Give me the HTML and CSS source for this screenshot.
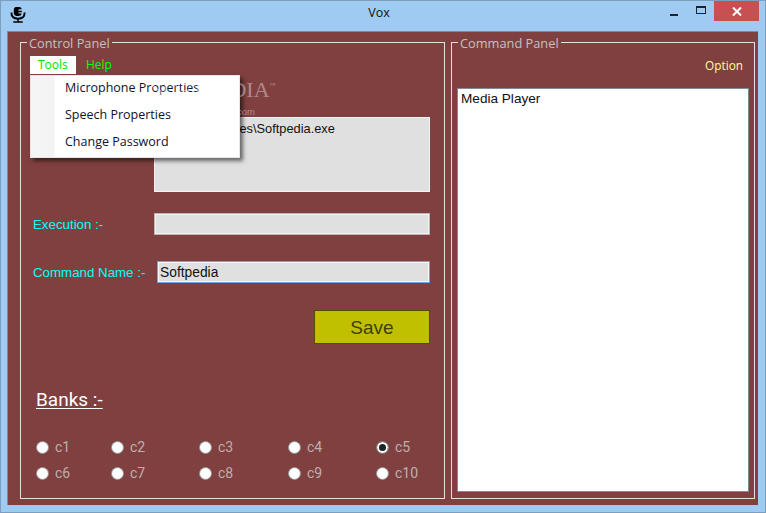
FILE: index.html
```html
<!DOCTYPE html>
<html lang="en">
<head>
<meta charset="utf-8">
<title>Vox</title>
<link rel="stylesheet" href="styles.css">
</head>
<body>
<div class="window">
  <header class="titlebar">
    <svg class="app-icon" width="17" height="17" viewBox="0 0 18 18">
      <path d="M6 1h3.500a3 3 0 0 1 3 2.500H9V5h3.500v1.500H9V8h3.500a3.300 3.300 0 0 1-3 2.500H6.500A3 3 0 0 1 4 8V4a3 3 0 0 1 2-3z" fill="#000"/>
      <path d="M1.500 7c0 4 2.500 6.500 7 6.500s7-2.500 7-6.500" fill="none" stroke="#000" stroke-width="2"/>
      <path d="M8.500 13v3.500M3.500 17h10" fill="none" stroke="#000" stroke-width="1.500"/>
    </svg>
    <div class="title">Vox</div>
    <div class="win-controls">
      <span class="ctl ctl-min"><i class="min-bar"></i></span>
      <span class="ctl ctl-max"><i class="max-box"></i></span>
      <span class="ctl ctl-close">
        <svg width="10" height="9" viewBox="0 0 10 9"><path d="M1 .5l8 8M9 .5l-8 8" stroke="#fff" stroke-width="2" fill="none"/></svg>
      </span>
    </div>
  </header>
  <main class="client">
    <fieldset class="panel control-panel">
      <legend>Control Panel</legend>
      <nav class="menubar">
        <span class="menu-item active">Tools</span>
        <span class="menu-item">Help</span>
      </nav>
      <div class="row row-path">
        <textarea class="field area" disabled>C:\Program Files\Softpedia.exe</textarea>
      </div>
      <div class="row row-exec">
        <label class="lbl">Execution :-</label>
        <input class="field" disabled>
      </div>
      <div class="row row-cmd">
        <label class="lbl">Command Name :-</label>
        <input class="field focus" value="Softpedia">
      </div>
      <div class="save-row"><button class="save">Save</button></div>
      <h2 class="banks">Banks :-</h2>
      <div class="radios">
        <label class="radio"><i class="dot"></i>c1</label>
        <label class="radio"><i class="dot"></i>c2</label>
        <label class="radio"><i class="dot"></i>c3</label>
        <label class="radio"><i class="dot"></i>c4</label>
        <label class="radio"><i class="dot on"></i>c5</label>
        <label class="radio"><i class="dot"></i>c6</label>
        <label class="radio"><i class="dot"></i>c7</label>
        <label class="radio"><i class="dot"></i>c8</label>
        <label class="radio"><i class="dot"></i>c9</label>
        <label class="radio"><i class="dot"></i>c10</label>
      </div>
      <ul class="dropdown">
        <li>Microphone Properties</li>
        <li>Speech Properties</li>
        <li>Change Password</li>
      </ul>
      <div class="watermark"><span class="wm-big">SOFTPEDIA<sup>™</sup></span><span class="wm-small">www.softpedia.com</span></div>
    </fieldset>
    <fieldset class="panel command-panel">
      <legend>Command Panel</legend>
      <div class="option">Option</div>
      <div class="listbox">Media Player</div>
    </fieldset>
  </main>
</div>
</body>
</html>
```

FILE: styles.css
```css
* { box-sizing: border-box; }
html, body { margin: 0; padding: 0; }
body { width: 766px; height: 513px; overflow: hidden; background: #9fcbf2; }

.window {
  width: 766px;
  height: 513px;
  display: flex;
  flex-direction: column;
  background: #9fcbf2;
  border: 1px solid #7c9fbf;
}

.titlebar {
  height: 29px;
  flex: none;
  display: flex;
  align-items: flex-start;
  position: relative;
}
.app-icon { margin: 5px 0 0 9px; }
.title {
  position: absolute;
  left: 0;
  right: 8px;
  top: 3px;
  text-align: center;
  font: 12.5px/18px "Open Sans", "Noto Sans", sans-serif;
  color: #111;
}
.win-controls { margin-left: auto; margin-right: 6px; display: flex; height: 20px; }
.ctl { display: flex; align-items: center; justify-content: center; height: 20px; }
.ctl-min { width: 27px; }
.ctl-max { width: 27px; }
.ctl-close { width: 45px; background: #c75050; }
.min-bar { width: 8px; height: 2px; background: #222; margin-top: 7px; }
.max-box { width: 10px; height: 8px; border: 1px solid #222; border-top-width: 2px; margin-top: -2px; }

.client {
  margin: 1px 6px 0 6px;
  width: 751px;
  height: 474px;
  background: #804040;
  display: flex;
  padding: 2px 0 0 12px;
  border-top: 1px solid #6f8db0;
  border-left: 1px solid #6f8db0;
}

.panel {
  margin: 0;
  padding: 0;
  border: 1px solid #e6e0e0;
  height: 465px;
  position: relative;
  font-family: "Liberation Sans", Arial, sans-serif;
}
.panel legend {
  margin-left: 6px;
  padding: 2px 2px 0;
  font: 12.8px/15px "Open Sans", "Noto Sans", sans-serif;
  color: #c4c0c0;
}
.control-panel { width: 425px; margin-right: 6px; }
.command-panel { width: 304px; }

.menubar { display: flex; margin: 5px 0 0 9px; height: 18px; }
.menu-item {
  font: 12px/18px "Open Sans", "Noto Sans", sans-serif;
  color: #00ff00;
  padding: 0 0 0 8px;
  width: 46px;
}
.menu-item.active { background: #fff; color: #00e000; }
.menu-item + .menu-item { padding-left: 10px; }

.row { display: flex; align-items: center; }
.row-path { margin: 43px 14px 0 133px; }
.row-exec { margin: 21px 14px 0 12px; }
.row-cmd { margin: 26px 14px 0 12px; }
.lbl { font-size: 13.3px; color: #00ffff; flex: 1; white-space: nowrap; }
.field {
  display: block;
  font: 13.8px/18px "Liberation Sans", Arial, sans-serif;
  color: #111;
  background: #e0e0e0;
  padding: 0 2px;
  height: 22px;
  margin: 0;
  resize: none;
  opacity: 1;
  border-radius: 0;
  border: 1px solid #b9b3b3;
  box-shadow: inset 0 0 0 1px #f6f6f6;
}
.row-exec .field { width: 276px; }
.row-cmd .field { width: 273px; }
.field.focus { border-color: #6ea5e6; }
.field.area {
  width: 276px;
  height: 75px;
  padding: 3px 2px;
  font-size: 12.8px;
  line-height: 16px;
  border: 1px solid #f4f4f4;
  box-shadow: none;
  overflow: hidden;
  -webkit-text-fill-color: #111;
}

.save-row { display: flex; justify-content: flex-end; margin: 27px 14px 0 0; }
.save {
  width: 116px;
  height: 34px;
  background: #c0c000;
  border: 1px solid #4f4f00;
  color: #404000;
  font: 19px "Liberation Sans", Arial, sans-serif;
  padding: 2px 0 0;
}

.banks {
  margin: 44px 0 0 15px;
  font: 400 19px/24px Roboto, sans-serif;
  color: #fff;
  text-decoration: underline;
  text-underline-offset: 2px;
}

.radios {
  display: grid;
  grid-template-columns: 75px 88px 89px 88px 60px;
  grid-auto-rows: 26px;
  margin: 22px 0 0 15px;
}
.radio {
  display: flex;
  align-items: center;
  font: 14px/16px Roboto, sans-serif;
  color: #bdb0b0;
}
.dot {
  width: 13px;
  height: 13px;
  border-radius: 50%;
  background: #fff;
  border: 1px solid #8e8e8e;
  margin-right: 6px;
  flex: none;
}
.dot.on { background: #222; box-shadow: inset 0 0 0 2px #fff; }

.watermark {
  position: absolute;
  left: 130px;
  top: 27px;
  color: rgba(255, 255, 255, 0.4);
  display: flex;
  flex-direction: column;
}
.wm-big { font: 400 22px/24px "Liberation Serif", serif; white-space: nowrap; }
.wm-big sup { font-size: 6px; vertical-align: 10px; line-height: 0; }
.wm-small { font: 9.5px/12px "Liberation Sans", sans-serif; padding-left: 22px; margin-top: 4px; white-space: nowrap; }

.dropdown {
  position: absolute;
  left: 9px;
  top: 24px;
  width: 210px;
  height: 83px;
  margin: 0;
  padding: 0 0 0 34px;
  list-style: none;
  background: linear-gradient(90deg, #f5f5f5 0, #f3f3f3 23px, #fff 24px);
  border: 1px solid #e6e6e6;
  box-shadow: 3px 3px 4px rgba(0, 0, 0, 0.55);
  font: 12.5px/24px "Open Sans", "Noto Sans", sans-serif;
  color: #101030;
}
.dropdown li { height: 27px; }

.option {
  margin: 5px 11px 0 0;
  text-align: right;
  font: 11.8px/18px "Open Sans", "Noto Sans", sans-serif;
  color: #ffffa0;
}
.listbox {
  margin: 14px 0 0 5px;
  width: 292px;
  height: 404px;
  background: #fff;
  border: 1px solid #7f8a99;
  padding: 2px 3px;
  font: 13.6px/16px "Liberation Sans", Arial, sans-serif;
  color: #111;
}
```
